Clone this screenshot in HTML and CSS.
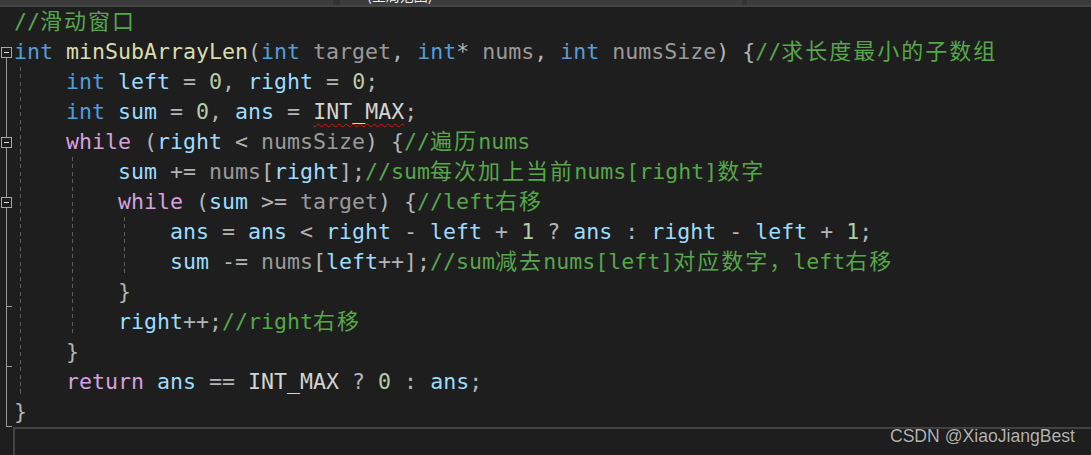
FILE: index.html
```html
<!DOCTYPE html>
<html>
<head>
<meta charset="utf-8">
<link rel="stylesheet" href="styles.css">
</head>
<body>
<div class="topbar">
  <div class="drop d1"></div>
  <div class="drop d2"><span class="droplabel">(全局范围)</span></div>
  <div class="drop d3"></div>
</div>
<div class="editor">
  <div class="row"><div class="g"></div><div class="code"><span class="c">//<span class="cj">滑动窗口</span></span></div></div>
  <div class="row"><div class="g"><div class="sp"></div><div class="box"><div class="minus"></div></div><div class="seg"></div></div><div class="code"><span class="k">int</span> <span class="f">minSubArrayLen</span>(<span class="k">int</span> <span class="pa">target</span>, <span class="k">int</span>* <span class="pa">nums</span>, <span class="k">int</span> <span class="pa">numsSize</span>) {<span class="c">//<span class="cj">求长度最小的子数组</span></span></div></div>
  <div class="row"><div class="g"><div class="seg"></div></div><div class="code"><span class="ind"></span><span class="k">int</span> <span class="v">left</span> = <span class="n">0</span>, <span class="v">right</span> = <span class="n">0</span>;</div></div>
  <div class="row"><div class="g"><div class="seg"></div></div><div class="code"><span class="ind"></span><span class="k">int</span> <span class="v">sum</span> = <span class="n">0</span>, <span class="v">ans</span> = <span class="m sq">INT_MAX</span>;</div></div>
  <div class="row"><div class="g"><div class="seg"></div><div class="box"><div class="minus"></div></div><div class="seg"></div></div><div class="code"><span class="ind"></span><span class="w">while</span> (<span class="v">right</span> &lt; <span class="pa">numsSize</span>) {<span class="c">//<span class="cj">遍历</span>nums</span></div></div>
  <div class="row"><div class="g"><div class="seg"></div></div><div class="code"><span class="ind"></span><span class="ind"></span><span class="v">sum</span> += <span class="pa">nums</span>[<span class="v">right</span>];<span class="c">//sum<span class="cj">每次加上当前</span>nums[right]<span class="cj">数字</span></span></div></div>
  <div class="row"><div class="g"><div class="seg"></div><div class="box"><div class="minus"></div></div><div class="seg"></div></div><div class="code"><span class="ind"></span><span class="ind"></span><span class="w">while</span> (<span class="v">sum</span> &gt;= <span class="pa">target</span>) {<span class="c">//left<span class="cj">右移</span></span></div></div>
  <div class="row"><div class="g"><div class="seg"></div></div><div class="code"><span class="ind"></span><span class="ind"></span><span class="ind"></span><span class="v">ans</span> = <span class="v">ans</span> &lt; <span class="v">right</span> - <span class="v">left</span> + <span class="n">1</span> ? <span class="v">ans</span> : <span class="v">right</span> - <span class="v">left</span> + <span class="n">1</span>;</div></div>
  <div class="row"><div class="g"><div class="seg"></div></div><div class="code"><span class="ind"></span><span class="ind"></span><span class="ind"></span><span class="v">sum</span> -= <span class="pa">nums</span>[<span class="v">left</span>++];<span class="c">//sum<span class="cj">减去</span>nums[left]<span class="cj">对应数字，</span>left<span class="cj">右移</span></span></div></div>
  <div class="row"><div class="g"><div class="seg"></div><div class="tick"></div></div><div class="code"><span class="ind"></span><span class="ind"></span>}</div></div>
  <div class="row"><div class="g"><div class="seg"></div></div><div class="code"><span class="ind"></span><span class="ind"></span><span class="v">right</span>++;<span class="c">//right<span class="cj">右移</span></span></div></div>
  <div class="row"><div class="g"><div class="seg"></div><div class="tick"></div></div><div class="code"><span class="ind"></span>}</div></div>
  <div class="row"><div class="g"><div class="seg"></div></div><div class="code"><span class="ind"></span><span class="w">return</span> <span class="v">ans</span> == <span class="m">INT_MAX</span> ? <span class="n">0</span> : <span class="v">ans</span>;</div></div>
  <div class="row"><div class="g"><div class="seg"></div><div class="tick"></div></div><div class="code">}</div></div>
</div>
<div class="panel"></div>
<div class="watermark">CSDN @XiaoJiangBest</div>
</body>
</html>
```
FILE: styles.css
```css
html, body {
  margin: 0;
  padding: 0;
}
body {
  width: 1091px;
  height: 455px;
  background: #1e1e1e;
  display: flex;
  flex-direction: column;
  overflow: hidden;
  position: relative;
}
.topbar {
  display: flex;
  height: 5px;
  background: #333333;
  border-bottom: 2px solid #444444;
  flex: none;
}
.drop {
  background: #3c3c3c;
  height: 5px;
  overflow: hidden;
}
.d1 { width: 333px; }
.d2 { width: 402px; margin-left: 7px; }
.d3 { flex: 1; margin-left: 5px; }
.droplabel {
  display: block;
  margin-top: -13px;
  margin-left: 27px;
  font: 14px/16px "Noto Sans CJK SC", sans-serif;
  color: #f0f0f0;
}
.editor {
  display: flex;
  flex-direction: column;
  flex: none;
}
.row {
  display: flex;
  height: 30px;
}
.g {
  width: 14px;
  flex: none;
  display: flex;
  flex-direction: column;
  align-items: flex-start;
}
.sp { flex: 1; }
.seg {
  flex: 1;
  width: 1px;
  margin-left: 6px;
  background: #9a9a9a;
}
.box {
  width: 9px;
  height: 9px;
  margin-left: 1px;
  border: 1px solid #a8a8a8;
  display: flex;
  align-items: center;
  justify-content: center;
  flex: none;
}
.minus {
  width: 5px;
  height: 1px;
  background: #e0e0e0;
}
.tick {
  width: 6px;
  height: 1px;
  margin-left: 6px;
  background: #9a9a9a;
  flex: none;
}
.code {
  font-family: "DejaVu Sans Mono", monospace;
  font-size: 21.6px;
  line-height: 30px;
  height: 30px;
  white-space: pre;
  color: #b4b4b4;
}
.ind {
  display: inline-block;
  width: 52px;
  height: 30px;
  vertical-align: top;
  background: repeating-linear-gradient(to bottom, #5c5c5c 0 4px, transparent 4px 7.5px) no-repeat 6px 0 / 1px 100%;
}
.k { color: #569cd6; }
.w { color: #d8a0df; }
.f { color: #dcdcaa; }
.pa { color: #9a9a9a; }
.v { color: #9cdcfe; }
.n { color: #b5cea8; }
.m { color: #d4d4d4; }
.sq {
  text-decoration: underline wavy #e51400;
  text-decoration-thickness: 1px;
  text-underline-offset: 4px;
}
.c { color: #57a64a; }
.cj {
  font-family: "Noto Sans CJK SC", sans-serif;
  font-size: 22px;
  line-height: 0;
  letter-spacing: 2px;
}
.panel {
  flex: 1;
  margin-left: 13px;
  border-top: 2px solid #424242;
  border-left: 2px solid #424242;
}
.watermark {
  position: absolute;
  right: 16px;
  top: 426px;
  font-family: "Liberation Sans", Arial, sans-serif;
  font-size: 17.6px;
  color: #b4b4b4;
  text-shadow: 0 0 1px #000;
}
```
